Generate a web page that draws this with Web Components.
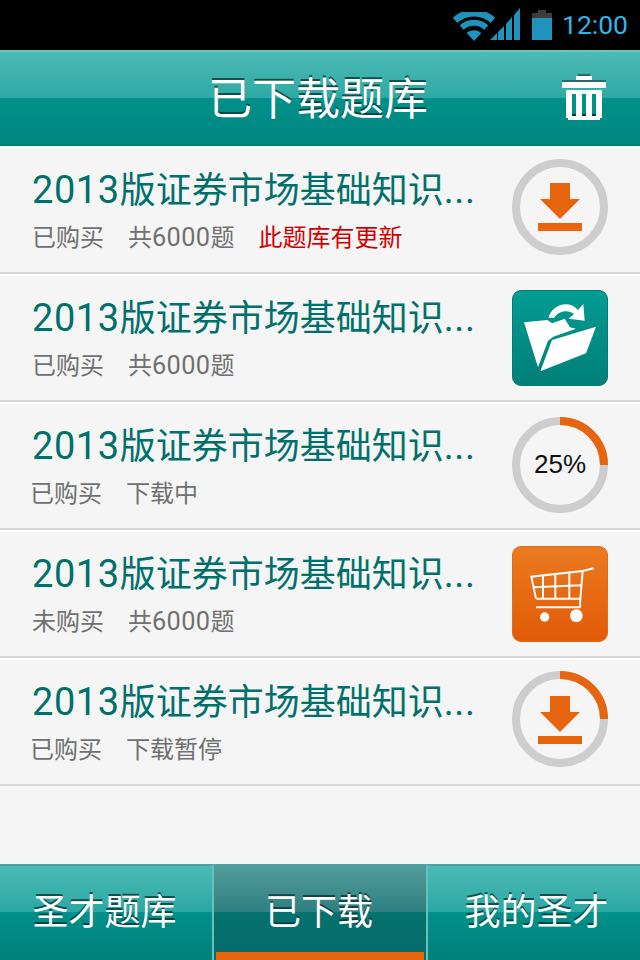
<!DOCTYPE html>
<html lang="zh">
<head>
<meta charset="utf-8">
<title>已下载题库</title>
<style>
html,body{margin:0;padding:0;background:#f5f5f5}
body{width:640px;height:960px;overflow:hidden;font-family:"Noto Sans CJK SC",sans-serif}
</style>
</head>
<body>
<x-app>
  <x-status slot="status">12:00</x-status>
  <x-header slot="header">已下载题库</x-header>
  <x-row><x-num>2013</x-num>版证券市场基础知识<x-num>...</x-num>
    <x-meta slot="meta">已购买</x-meta><x-meta slot="meta">共<x-num>6000</x-num>题</x-meta><x-meta slot="meta" kind="alert">此题库有更新</x-meta>
    <x-ring slot="icon" mode="arrow" progress="0" lift="3"></x-ring>
  </x-row>
  <x-row><x-num>2013</x-num>版证券市场基础知识<x-num>...</x-num>
    <x-meta slot="meta">已购买</x-meta><x-meta slot="meta">共<x-num>6000</x-num>题</x-meta>
    <x-tile slot="icon" kind="folder"></x-tile>
  </x-row>
  <x-row shift><x-num>2013</x-num>版证券市场基础知识<x-num>...</x-num>
    <x-meta slot="meta">已购买</x-meta><x-meta slot="meta">下载中</x-meta>
    <x-ring slot="icon" mode="percent" progress="25" lift="1">25%</x-ring>
  </x-row>
  <x-row><x-num>2013</x-num>版证券市场基础知识<x-num>...</x-num>
    <x-meta slot="meta">未购买</x-meta><x-meta slot="meta">共<x-num>6000</x-num>题</x-meta>
    <x-tile slot="icon" kind="cart"></x-tile>
  </x-row>
  <x-row shift><x-num>2013</x-num>版证券市场基础知识<x-num>...</x-num>
    <x-meta slot="meta">已购买</x-meta><x-meta slot="meta">下载暂停</x-meta>
    <x-ring slot="icon" mode="arrow" progress="25" lift="3" drop="1"></x-ring>
  </x-row>
  <x-tabbar slot="tabs">
    <x-tab pos="1">圣才题库</x-tab>
    <x-tab pos="2" active>已下载</x-tab>
    <x-tab pos="3">我的圣才</x-tab>
  </x-tabbar>
</x-app>
<script>
function comp(name, html, setup){
  customElements.define(name, class extends HTMLElement{
    constructor(){super();this.attachShadow({mode:'open'}).innerHTML=html;}
    connectedCallback(){if(setup)setup(this,this.shadowRoot);}
  });
}
comp('x-app',`<style>
:host{display:flex;flex-direction:column;width:640px;height:960px;background:#f5f5f5}
main{flex:1;display:flex;flex-direction:column;min-height:0}
</style><slot name="status"></slot><slot name="header"></slot><main><slot></slot></main><slot name="tabs"></slot>`);

comp('x-num',`<style>
:host{font-family:Roboto,sans-serif;font-size:1.056em;line-height:0;letter-spacing:.015em}
</style><slot></slot>`);

comp('x-status',`<style>
:host{display:flex;align-items:center;justify-content:flex-end;height:50px;box-sizing:border-box;background:#000;padding-right:12px;color:#33b5e5;font:26.5px/50px Roboto,sans-serif}
svg{display:block;margin-right:10px}
span{display:block;width:66px;white-space:nowrap}
</style>
<svg width="100" height="50" viewBox="452 0 100 50">
  <defs><clipPath id="w"><path d="M474 41L447.5 12H500.5Z"/></clipPath></defs>
  <g clip-path="url(#w)" fill="none" stroke="#1f93bb">
    <circle cx="474" cy="41" r="28" stroke-width="7"/>
    <circle cx="474" cy="41" r="18.2" stroke-width="6"/>
    <circle cx="474" cy="41" r="5.4" stroke-width="10.8"/>
  </g>
  <g fill="#1f93bb">
    <path d="M490 40L497 33V40Z"/><path d="M498 32L504 26V40H498Z"/><path d="M506 24L512 17V40H506Z"/><path d="M514 15L520 8V40H514Z"/>
  </g>
  <path d="M538 10H546V13H552V18H532V13H538Z" fill="#3c3c3c"/>
  <rect x="532" y="18" width="20" height="22" fill="#1f93bb"/>
</svg><span><slot></slot></span>`);

comp('x-header',`<style>
:host{display:flex;align-items:center;justify-content:center;position:relative;box-sizing:border-box;height:96px;
border-top:2px solid #6cc3bf;border-bottom:1px solid #007570;padding:0 4px 6px 0;
background:linear-gradient(#4cbab5 0,#2fa9a4 49%,#00918a 49%,#008680 100%);
color:#fff;font-size:44px;text-shadow:0 -2px 0 rgba(0,50,50,.75)}
svg{position:absolute;right:34px;top:22px}
</style><slot></slot>
<svg width="44" height="46" viewBox="562 74 44 46" shape-rendering="crispEdges">
  <path d="M578 74H590V76H592V80H576V76H578Z" fill="#fff"/>
  <rect x="578" y="74" width="12" height="2" fill="#2c6767"/>
  <rect x="562" y="80" width="44" height="8" fill="#fff"/>
  <rect x="562" y="80" width="44" height="2" fill="#2c6767"/>
  <path d="M566 90H602V118H600V120H568V118H566Z" fill="#fff"/>
  <g fill="#00918a"><rect x="572" y="94" width="4" height="20"/><rect x="582" y="94" width="4" height="20"/><rect x="592" y="94" width="4" height="20"/></g>
  <g fill="#123c3c"><rect x="572" y="114" width="4" height="2"/><rect x="582" y="114" width="4" height="2"/><rect x="592" y="114" width="4" height="2"/></g>
</svg>`);

comp('x-row',`<style>
:host{display:flex;align-items:center;box-sizing:border-box;height:128px;flex:none;border-top:2px solid #fff;border-bottom:2px solid #d8d8d8;padding:0 32px;background:#f5f5f5}
.text{flex:1;min-width:0;display:flex;flex-direction:column}
.title{font-size:36px;line-height:44px;color:#00706c;white-space:nowrap;margin-top:-3px}
.meta{display:flex;gap:24px;margin-top:11px;height:32px;align-items:center}
:host([shift]) .meta{margin-left:-2px}
</style>
<div class="text"><div class="title"><slot></slot></div><div class="meta"><slot name="meta"></slot></div></div>
<slot name="icon"></slot>`);

comp('x-meta',`<style>
:host{display:block;font-size:24px;line-height:32px;color:#707070;white-space:nowrap}
:host([kind=alert]){color:#d40000}
</style><slot></slot>`);

const ARROW=`<path d="M550 183H570V199H580L560 219L540 199H550Z" fill="#e8650f" transform="translate(-560 -207)"/><rect x="-22" y="16" width="44" height="8" fill="#e8650f"/>`;
comp('x-ring',`<style>
:host{display:block;position:relative;width:96px;height:96px;flex:none;color:#111;font:26px/94px "Liberation Sans",sans-serif;text-align:center}
svg{position:absolute;left:0;top:0}
span{position:relative}
</style><svg width="96" height="96" viewBox="-48 -48 96 96"></svg><span><slot></slot></span>`,
(el,root)=>{
  const p=+el.getAttribute('progress')||0;
  const lift=+el.getAttribute('lift')||0, drop=+el.getAttribute('drop')||0;
  el.style.marginBottom=(lift*2)+'px';
  let s=`<circle r="44" fill="none" stroke="#cdcdcd" stroke-width="8"/>`;
  if(p>0){
    const a=2*Math.PI*p/100;
    s+=`<path d="M0 -44A44 44 0 0 1 ${(44*Math.sin(a)).toFixed(2)} ${(-44*Math.cos(a)).toFixed(2)}" fill="none" stroke="#e8650f" stroke-width="8"/>`;
  }
  if(el.getAttribute('mode')==='arrow')s+=`<g transform="translate(0 ${drop})">${ARROW}</g>`;
  root.querySelector('svg').innerHTML=s;
});

const FOLDER=`<path d="M110 84C114 50 168 24 198 60L214 42L218 92L170 86L186 72C168 58 140 62 126 84Z" fill="#fff"/>
<path d="M36 97L106 90L120 100L158 86L174 112L192 116L124 140L108 152L78 232Z" fill="#fff"/>
<path d="M120 150L252 110L222 190L85 244Z" fill="#fff"/>`;
const CART=`<g fill="none" stroke="#fff" stroke-width="6">
<path d="M245 67L212 75L58 92L72 158"/><path d="M212 75L204 172L205 182"/>
<path d="M72 184H206"/><path d="M73 158H206"/><path d="M63 124L209 118"/>
<path d="M93 88V158M130 84V158M172 80V158"/></g>
<circle cx="98" cy="213" r="14" fill="#fff"/><circle cx="193" cy="209" r="19" fill="#fff"/>`;
comp('x-tile',`<style>
:host{display:block;width:96px;height:96px;flex:none;box-sizing:border-box;border-radius:9px;
background:linear-gradient(#029c93,#007f78);border:1px solid #037a75}
:host([kind=cart]){background:linear-gradient(#ea7a20,#e25a08);border-color:#e56a14}
svg{display:block;margin:-1px}
</style><svg width="96" height="96" viewBox="0 0 288 288"></svg>`,
(el,root)=>{root.querySelector('svg').innerHTML=el.getAttribute('kind')==='cart'?CART:FOLDER;});

comp('x-tabbar',`<style>
:host{display:grid;grid-template-columns:214px 214px 212px;height:96px;margin-top:auto;flex:none}
</style><slot></slot>`);

comp('x-tab',`<style>
:host{display:flex;align-items:center;justify-content:center;position:relative;box-sizing:border-box;height:96px;
border-top:2px solid #4f9f9e;border-right:2px solid #66c0bc;padding-bottom:8px;
background:linear-gradient(#4cbab5 0,#2ba8a3 49%,#00918a 49%,#008079 100%);
color:#fff;font-size:36px;text-shadow:0 -2px 0 rgba(0,50,50,.75)}
:host([pos="1"]){padding-right:3px}
:host([pos="2"]){padding-right:2px}
:host([pos="3"]){border-right:0;padding-left:5px}
:host([active]){background:linear-gradient(#529c9c 0,#2f7f80 49%,#04716e 49%,#066d6b 100%)}
:host([active])::after{content:"";position:absolute;left:2px;right:2px;bottom:0;height:8px;background:#e8650f}
</style><slot></slot>`);
</script>
</body>
</html>
